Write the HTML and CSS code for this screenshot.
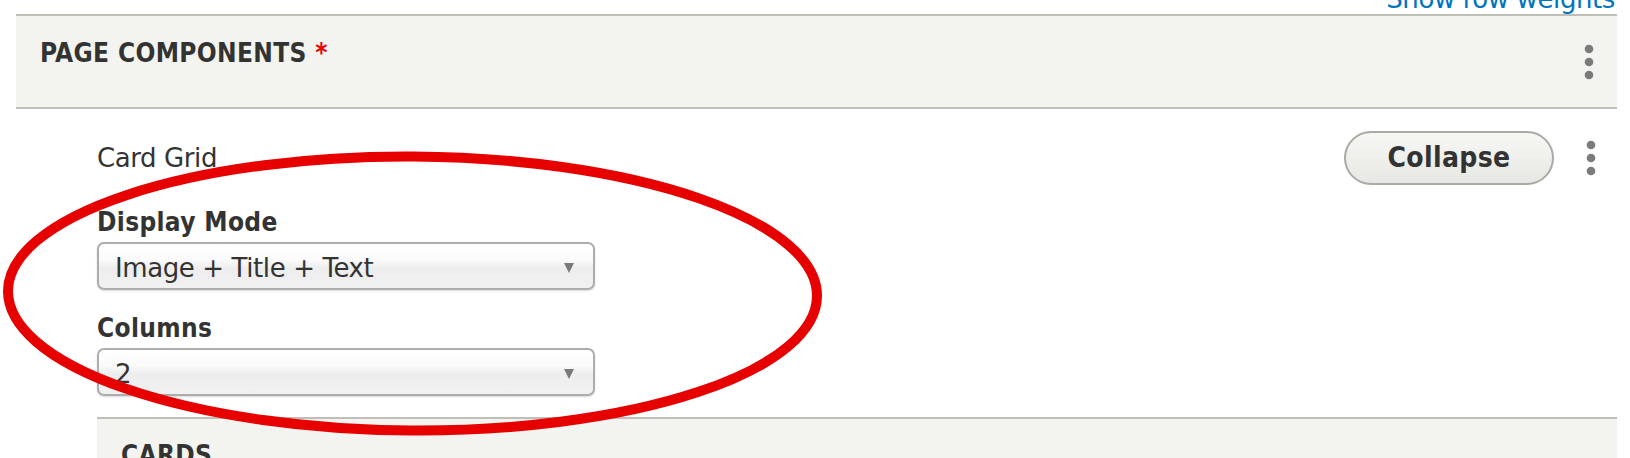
FILE: index.html
```html
<!DOCTYPE html>
<html lang="en">
<head>
<meta charset="utf-8">
<title>Page components</title>
<link rel="stylesheet" href="styles.css">
</head>
<body>
<div class="weights"><a class="weights-link" href="#">Show row weights</a></div>
<div class="components">
  <div class="comp-header">
    <span class="legend">PAGE COMPONENTS <span class="req">*</span></span>
    <svg class="kebab" width="10" height="36" viewBox="0 0 10 36" aria-hidden="true"><circle cx="5" cy="5" r="4.3"/><circle cx="5" cy="18" r="4.3"/><circle cx="5" cy="31" r="4.3"/></svg>
  </div>
  <div class="para">
    <div class="para-head">
      <span class="para-title">Card Grid</span>
      <div class="para-actions">
        <button class="btn" type="button">Collapse</button>
        <svg class="kebab" width="10" height="36" viewBox="0 0 10 36" aria-hidden="true"><circle cx="5" cy="5" r="4.3"/><circle cx="5" cy="18" r="4.3"/><circle cx="5" cy="31" r="4.3"/></svg>
      </div>
    </div>
    <div class="field">
      <label class="field-label">Display Mode</label>
      <div class="select"><span class="select-value">Image + Title + Text</span><span class="select-arrow"></span></div>
    </div>
    <div class="field field-second">
      <label class="field-label">Columns</label>
      <div class="select"><span class="select-value">2</span><span class="select-arrow"></span></div>
    </div>
    <div class="cards"><span class="cards-title">CARDS</span></div>
  </div>
</div>
<svg class="annotation" width="830" height="458" viewBox="0 0 830 458" aria-hidden="true">
  <ellipse cx="412.5" cy="293.5" rx="404.5" ry="137" transform="rotate(0.35 412.5 293.5)"/>
</svg>
</body>
</html>
```

FILE: styles.css
```css
html, body {
  margin: 0;
  padding: 0;
  background: #ffffff;
}

body {
  font-family: "DejaVu Sans", "Liberation Sans", sans-serif;
  font-size: 26px;
  line-height: 30px;
  color: #333333;
  overflow: hidden;
}

.weights {
  margin-top: -16px;
  height: 30px;
  padding-right: 15px;
  text-align: right;
  letter-spacing: -0.4px;
}

.weights-link {
  color: #0074bd;
  text-decoration: none;
}

.components {
  margin: 0 13px 0 16px;
}

.comp-header {
  display: flex;
  align-items: center;
  justify-content: space-between;
  height: 91px;
  padding: 0 23px 0 24px;
  background: #f3f3ef;
  border-top: 2px solid #c0bfb7;
  border-bottom: 2px solid #c0bfb7;
}

.legend,
.field-label,
.cards-title,
.btn {
  font-family: "DejaVu Sans Condensed", "DejaVu Sans", sans-serif;
  font-weight: bold;
  letter-spacing: 0.35px;
}

.legend {
  align-self: flex-start;
  margin-top: 22px;
}

.req {
  color: #ee0000;
}

.kebab {
  display: block;
  fill: #7b7b7b;
  flex: none;
}

.para {
  padding: 22px 0 0 81px;
}

.para-head {
  display: flex;
  align-items: center;
  justify-content: space-between;
  height: 54px;
}

.para-title {
  letter-spacing: -0.4px;
}

.para-actions {
  display: flex;
  align-items: center;
  gap: 32px;
  padding-right: 21px;
}

.btn {
  box-sizing: border-box;
  width: 210px;
  height: 54px;
  border: 2px solid #a9a9a6;
  border-radius: 27px;
  background: linear-gradient(#f6f6f3, #e8e8e3);
  color: #333333;
  font-size: 28px;
  line-height: 32px;
  padding: 0;
}

.field {
  margin-top: 22px;
}

.field-second {
  margin-top: 23px;
}

.field-label {
  display: block;
  height: 30px;
}

.select {
  box-sizing: border-box;
  display: flex;
  align-items: center;
  width: 498px;
  height: 48px;
  margin-top: 5px;
  padding: 3px 19px 0 16px;
  border: 2px solid #adadad;
  border-radius: 7px;
  background: linear-gradient(#ffffff 0%, #fbfbfb 35%, #ededed 55%, #f1f1f1 100%);
  box-shadow: 0 1px 2px rgba(0, 0, 0, 0.15);
}

.select-value {
  flex: 1;
  letter-spacing: -0.4px;
}

.select-arrow {
  width: 0;
  height: 0;
  border-left: 5.5px solid transparent;
  border-right: 5.5px solid transparent;
  border-top: 10px solid #7a7a7a;
}

.cards {
  margin-top: 21px;
  padding: 21px 24px 40px;
  background: #f3f3ef;
  border-top: 2px solid #c0bfb7;
}

.annotation {
  position: absolute;
  top: 0;
  left: 0;
  pointer-events: none;
}

.annotation ellipse {
  fill: none;
  stroke: #e60000;
  stroke-width: 10;
}
```
